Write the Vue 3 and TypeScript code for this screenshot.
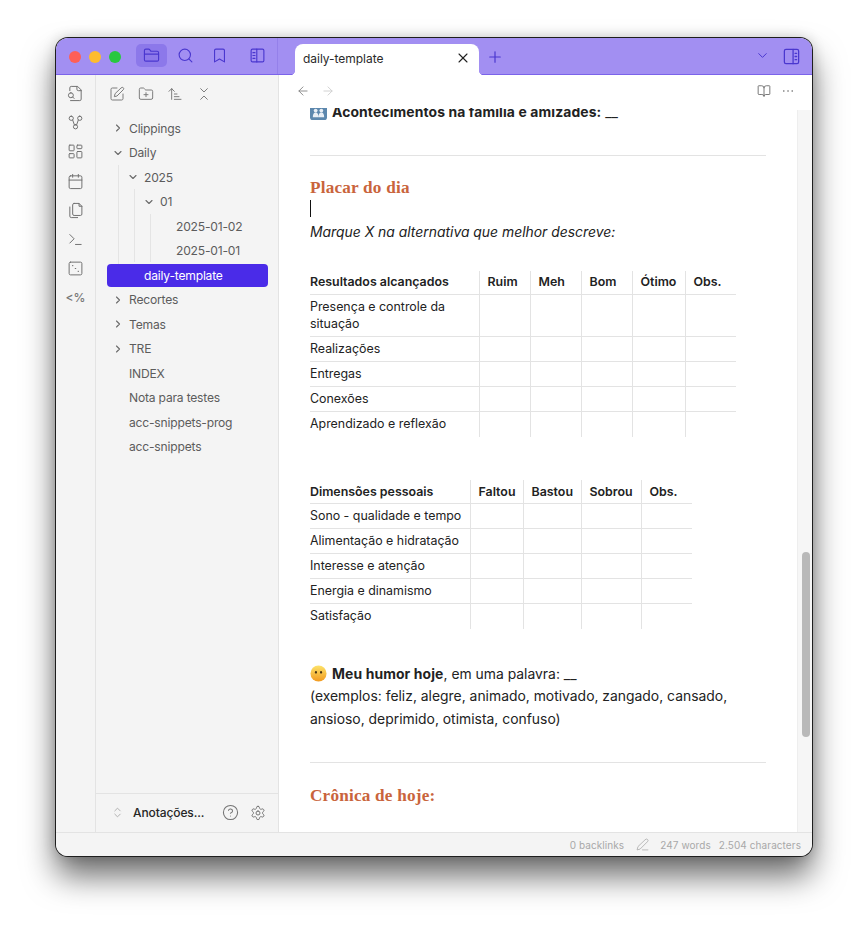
<script setup lang="ts">
const P: Record<string, string[]> = {
  folder: ['M20 20a2 2 0 0 0 2-2V8a2 2 0 0 0-2-2h-7.9a2 2 0 0 1-1.69-.9L9.6 3.9A2 2 0 0 0 7.93 3H4a2 2 0 0 0-2 2v13a2 2 0 0 0 2 2Z', 'M2 10h20'],
  search: ['M11 3a8 8 0 1 0 0 16a8 8 0 1 0 0-16Z', 'M21 21l-4.3-4.3'],
  bookmark: ['M19 21l-7-4-7 4V5a2 2 0 0 1 2-2h10a2 2 0 0 1 2 2v16Z'],
  sideL: ['M5 3h14a2 2 0 0 1 2 2v14a2 2 0 0 1-2 2H5a2 2 0 0 1-2-2V5a2 2 0 0 1 2-2Z', 'M11 3v18', 'M5.5 8h3', 'M5.5 12h3', 'M5.5 16h3'],
  sideR: ['M5 3h14a2 2 0 0 1 2 2v14a2 2 0 0 1-2 2H5a2 2 0 0 1-2-2V5a2 2 0 0 1 2-2Z', 'M14 3v18', 'M16.5 8h2', 'M16.5 12h2', 'M16.5 16h2'],
  chevD: ['M6 9l6 6 6-6'],
  chevR: ['M9 6l6 6-6 6'],
  plus: ['M5 12h14', 'M12 5v14'],
  x: ['M18 6L6 18', 'M6 6l12 12'],
  fileSearch: ['M14 2v4a2 2 0 0 0 2 2h4', 'M5 22h13a2 2 0 0 0 2-2V7l-5-5H6a2 2 0 0 0-2 2v4', 'M5.5 11a3.5 3.5 0 1 0 0 7a3.5 3.5 0 1 0 0-7Z', 'M8 17l2 2'],
  graph: ['M6 3a3 3 0 1 0 0 6a3 3 0 1 0 0-6Z', 'M18 3a3 3 0 1 0 0 6a3 3 0 1 0 0-6Z', 'M12 15a3 3 0 1 0 0 6a3 3 0 1 0 0-6Z', 'M8 8.5l2.5 7', 'M16 8.5l-2.5 7'],
  dash: ['M4 3h5a1 1 0 0 1 1 1v6a1 1 0 0 1-1 1H4a1 1 0 0 1-1-1V4a1 1 0 0 1 1-1Z', 'M15 3h5a1 1 0 0 1 1 1v3a1 1 0 0 1-1 1h-5a1 1 0 0 1-1-1V4a1 1 0 0 1 1-1Z', 'M15 12h5a1 1 0 0 1 1 1v7a1 1 0 0 1-1 1h-5a1 1 0 0 1-1-1v-7a1 1 0 0 1 1-1Z', 'M4 15h5a1 1 0 0 1 1 1v4a1 1 0 0 1-1 1H4a1 1 0 0 1-1-1v-4a1 1 0 0 1 1-1Z'],
  calendar: ['M8 2v4', 'M16 2v4', 'M5 4h14a2 2 0 0 1 2 2v14a2 2 0 0 1-2 2H5a2 2 0 0 1-2-2V6a2 2 0 0 1 2-2Z', 'M3 10h18'],
  copy: ['M10 2h7l4 4v11a2 2 0 0 1-2 2h-9a2 2 0 0 1-2-2V4a2 2 0 0 1 2-2Z', 'M17 2v4h4', 'M4 7v13a2 2 0 0 0 2 2h9'],
  terminal: ['M4 17l6-6-6-6', 'M12 19h8'],
  dice: ['M5 3h14a2 2 0 0 1 2 2v14a2 2 0 0 1-2 2H5a2 2 0 0 1-2-2V5a2 2 0 0 1 2-2Z', 'M7.6 8h.8', 'M11.6 12h.8', 'M15.6 16h.8'],
  edit: ['M12 3H5a2 2 0 0 0-2 2v14a2 2 0 0 0 2 2h14a2 2 0 0 0 2-2v-7', 'M18.4 2.6a2.1 2.1 0 1 1 3 3L12 15l-4 1 1-4Z'],
  folderPlus: ['M12 10v6', 'M9 13h6', 'M20 20a2 2 0 0 0 2-2V8a2 2 0 0 0-2-2h-7.9a2 2 0 0 1-1.69-.9L9.6 3.9A2 2 0 0 0 7.93 3H4a2 2 0 0 0-2 2v13a2 2 0 0 0 2 2Z'],
  sort: ['M3 8l4-4 4 4', 'M7 4v16', 'M11 12h4', 'M11 16h7', 'M11 20h10'],
  collapse: ['M7 20l5-5 5 5', 'M7 4l5 5 5-5'],
  updown: ['M7 15l5 5 5-5', 'M7 9l5-5 5 5'],
  help: ['M12 2a10 10 0 1 0 0 20a10 10 0 1 0 0-20Z', 'M9.1 9a3 3 0 0 1 5.8 1c0 2-3 3-3 3', 'M12 17h.01'],
  gear: ['M12.2 2h-.4a2 2 0 0 0-2 2v.2a2 2 0 0 1-1 1.7l-.4.3a2 2 0 0 1-2 0l-.2-.1a2 2 0 0 0-2.7.7l-.2.4a2 2 0 0 0 .7 2.7l.2.1a2 2 0 0 1 1 1.7v.5a2 2 0 0 1-1 1.7l-.2.1a2 2 0 0 0-.7 2.7l.2.4a2 2 0 0 0 2.7.7l.2-.1a2 2 0 0 1 2 0l.4.3a2 2 0 0 1 1 1.7v.2a2 2 0 0 0 2 2h.4a2 2 0 0 0 2-2v-.2a2 2 0 0 1 1-1.7l.4-.3a2 2 0 0 1 2 0l.2.1a2 2 0 0 0 2.7-.7l.2-.4a2 2 0 0 0-.7-2.7l-.2-.1a2 2 0 0 1-1-1.7v-.5a2 2 0 0 1 1-1.7l.2-.1a2 2 0 0 0 .7-2.7l-.2-.4a2 2 0 0 0-2.7-.7l-.2.1a2 2 0 0 1-2 0l-.4-.3a2 2 0 0 1-1-1.7V4a2 2 0 0 0-2-2Z', 'M12 9a3 3 0 1 0 0 6a3 3 0 1 0 0-6Z'],
  book: ['M12 7v14', 'M3 18a1 1 0 0 1-1-1V4a1 1 0 0 1 1-1h5a4 4 0 0 1 4 4 4 4 0 0 1 4-4h5a1 1 0 0 1 1 1v13a1 1 0 0 1-1 1h-6a3 3 0 0 0-3 3 3 3 0 0 0-3-3Z'],
  more: ['M4.5 12h.5', 'M11.8 12h.5', 'M19 12h.5'],
  left: ['M19 12H5', 'M12 19l-7-7 7-7'],
  right: ['M5 12h14', 'M12 5l7 7-7 7'],
  pen: ['M17 3a2.85 2.85 0 1 1 4 4L7.5 20.5 2 22l1.5-5.5Z', 'M12 22h10'],
}
const ribbon = ['fileSearch', 'graph', 'dash', 'calendar', 'copy', 'terminal', 'dice']
const nav = ['edit', 'folderPlus', 'sort', 'collapse']
const top = ['Clippings']
const rest1 = ['Recortes', 'Temas', 'TRE']
const rest2 = ['INDEX', 'Nota para testes', 'acc-snippets-prog', 'acc-snippets']
const t1Head = ['Resultados alcançados', 'Ruim', 'Meh', 'Bom', 'Ótimo', 'Obs.']
const t1Rows = ['Presença e controle da situação', 'Realizações', 'Entregas', 'Conexões', 'Aprendizado e reflexão']
const t1Cols = [169, 51, 51, 51, 53, 51]
const t2Head = ['Dimensões pessoais', 'Faltou', 'Bastou', 'Sobrou', 'Obs.']
const t2Rows = ['Sono - qualidade e tempo', 'Alimentação e hidratação', 'Interesse e atenção', 'Energia e dinamismo', 'Satisfação']
const t2Cols = [160, 53, 58, 60, 51]
</script>

<template>
  <div class="stage">
    <div class="window">
      <header class="titlebar">
        <div class="left-tools">
          <div class="lights"><i class="red"></i><i class="yellow"></i><i class="green"></i></div>
          <div class="tbtn active"><svg class="ic" viewBox="0 0 24 24"><path v-for="d in P.folder" :key="d" :d="d" /></svg></div>
          <div class="tbtn"><svg class="ic" viewBox="0 0 24 24"><path v-for="d in P.search" :key="d" :d="d" /></svg></div>
          <div class="tbtn"><svg class="ic" viewBox="0 0 24 24"><path v-for="d in P.bookmark" :key="d" :d="d" /></svg></div>
          <div class="tbtn last"><svg class="ic" viewBox="0 0 24 24"><path v-for="d in P.sideL" :key="d" :d="d" /></svg></div>
        </div>
        <div class="tabs">
          <div class="tab">
            <span>daily-template</span>
            <svg class="ic close" viewBox="0 0 24 24"><path v-for="d in P.x" :key="d" :d="d" /></svg>
          </div>
          <svg class="ic newtab" viewBox="0 0 24 24"><path v-for="d in P.plus" :key="d" :d="d" /></svg>
          <div class="spacer"></div>
          <svg class="ic small" viewBox="0 0 24 24"><path v-for="d in P.chevD" :key="d" :d="d" /></svg>
          <svg class="ic sider" viewBox="0 0 24 24"><path v-for="d in P.sideR" :key="d" :d="d" /></svg>
        </div>
      </header>

      <div class="body">
        <aside class="ribbon">
          <svg v-for="n in ribbon" :key="n" class="ric" viewBox="0 0 24 24"><path v-for="d in P[n]" :key="d" :d="d" /></svg>
          <span class="tpl">&lt;%</span>
        </aside>

        <aside class="sidebar">
          <div class="navbar">
            <svg v-for="n in nav" :key="n" class="nic" viewBox="0 0 24 24"><path v-for="d in P[n]" :key="d" :d="d" /></svg>
          </div>
          <div class="tree">
            <div v-for="f in top" :key="f" class="row"><svg class="chev" viewBox="0 0 24 24"><path :d="P.chevR[0]" /></svg>{{ f }}</div>
            <div class="row"><svg class="chev" viewBox="0 0 24 24"><path :d="P.chevD[0]" /></svg>Daily</div>
            <div class="kids">
              <div class="row"><svg class="chev" viewBox="0 0 24 24"><path :d="P.chevD[0]" /></svg>2025</div>
              <div class="kids k2">
                <div class="row"><svg class="chev" viewBox="0 0 24 24"><path :d="P.chevD[0]" /></svg>01</div>
                <div class="kids k3">
                  <div class="row">2025-01-02</div>
                  <div class="row">2025-01-01</div>
                </div>
              </div>
              <div class="row selected">daily-template</div>
            </div>
            <div v-for="f in rest1" :key="f" class="row"><svg class="chev" viewBox="0 0 24 24"><path :d="P.chevR[0]" /></svg>{{ f }}</div>
            <div v-for="f in rest2" :key="f" class="row">{{ f }}</div>
          </div>
          <div class="vault">
            <svg class="updown" viewBox="0 0 24 24"><path v-for="d in P.updown" :key="d" :d="d" /></svg>
            <span class="vname">Anotações...</span>
            <svg class="vic help" viewBox="0 0 24 24"><path v-for="d in P.help" :key="d" :d="d" /></svg>
            <svg class="vic" viewBox="0 0 24 24"><path v-for="d in P.gear" :key="d" :d="d" /></svg>
          </div>
        </aside>

        <main class="main">
          <div class="viewhead">
            <svg class="hic" viewBox="0 0 24 24"><path v-for="d in P.left" :key="d" :d="d" /></svg>
            <svg class="hic dim" viewBox="0 0 24 24"><path v-for="d in P.right" :key="d" :d="d" /></svg>
            <div class="spacer"></div>
            <svg class="hic book" viewBox="0 0 24 24"><path v-for="d in P.book" :key="d" :d="d" /></svg>
            <svg class="hic morei" viewBox="0 0 24 24"><path v-for="d in P.more" :key="d" :d="d" /></svg>
          </div>
          <div class="scroll">
            <div class="note">
              <p class="line first">
                <svg class="emoji fam" viewBox="0 0 18 18">
                  <rect x="0" y="0" width="18" height="18" rx="3" fill="#5c87ad" />
                  <circle cx="6" cy="8" r="2" fill="#e8eef5" /><circle cx="12" cy="8" r="2" fill="#e8eef5" />
                  <path d="M3 15c0-3 1-5 3-5s3 2 3 5Z M9 15c0-3 1-5 3-5s3 2 3 5Z" fill="#e8eef5" />
                </svg>
                <strong>Acontecimentos na família e amizades:</strong> __
              </p>
              <hr class="rule" />
              <h2 class="head">Placar do dia</h2>
              <div class="cursorline"><i class="caret"></i></div>
              <p class="line"><em>Marque X na alternativa que melhor descreve:</em></p>

              <table class="grid t1">
                <colgroup><col v-for="(w, i) in t1Cols" :key="i" :style="{ width: w + 'px' }" /></colgroup>
                <thead><tr><th v-for="h in t1Head" :key="h">{{ h }}</th></tr></thead>
                <tbody>
                  <tr v-for="(r, ri) in t1Rows" :key="r" :class="{ tall: ri === 0 }">
                    <td>{{ r }}</td><td v-for="n in 5" :key="n"></td>
                  </tr>
                </tbody>
              </table>

              <table class="grid t2">
                <colgroup><col v-for="(w, i) in t2Cols" :key="i" :style="{ width: w + 'px' }" /></colgroup>
                <thead><tr><th v-for="h in t2Head" :key="h">{{ h }}</th></tr></thead>
                <tbody>
                  <tr v-for="r in t2Rows" :key="r">
                    <td>{{ r }}</td><td v-for="n in 4" :key="n"></td>
                  </tr>
                </tbody>
              </table>

              <p class="mood">
                <svg class="emoji face" viewBox="0 0 18 18">
                  <defs><linearGradient id="fg" x1="0" y1="0" x2="0" y2="1"><stop offset="0" stop-color="#fde36a" /><stop offset="1" stop-color="#f29a1f" /></linearGradient></defs>
                  <circle cx="9" cy="9" r="8.5" fill="url(#fg)" />
                  <ellipse cx="6.3" cy="7.8" rx="1.1" ry="1.5" fill="#4a3413" />
                  <ellipse cx="11.7" cy="7.8" rx="1.1" ry="1.5" fill="#4a3413" />
                </svg>
                <strong>Meu humor hoje</strong>, em uma palavra: __<br />
                (exemplos: feliz, alegre, animado, motivado, zangado, cansado,<br />
                ansioso, deprimido, otimista, confuso)
              </p>
              <hr class="rule r2" />
              <h2 class="head h2b">Crônica de hoje:</h2>
            </div>
            <div class="track"><div class="thumb"></div></div>
          </div>
        </main>
      </div>

      <footer class="status">
        <span class="gapr">0 backlinks</span>
        <svg class="pen" viewBox="0 0 24 24"><path v-for="d in P.pen" :key="d" :d="d" /></svg>
        <span class="words">247 words</span>
        <span>2.504 characters</span>
      </footer>
    </div>
  </div>
</template>

<style>
html, body { margin: 0; background: #fff; }
</style>

<style scoped>
* { box-sizing: border-box; }
svg { fill: none; stroke: currentColor; stroke-linecap: round; stroke-linejoin: round; display: block; flex: none; }
.stage {
  width: 868px; height: 930px; padding: 38px 56px 74px;
  font-family: Inter, "Noto Sans", sans-serif; color: #222; overflow: hidden;
}
.window {
  width: 756px; height: 818px; border-radius: 12px; overflow: hidden;
  display: flex; flex-direction: column; background: #fff;
  box-shadow: 0 0 0 1px #1e1e1e, 0 20px 32px rgba(0,0,0,.58), 0 0 14px rgba(0,0,0,.2);
}
.titlebar { height: 37px; flex: none; display: flex; background: #a28ff2; border-bottom: 1px solid #7b63ea; }
.left-tools { width: 222px; display: flex; align-items: flex-start; border-right: 1px solid #9480ea; flex: none; height: 36px; position: relative; }
.lights { display: flex; gap: 8px; padding: 13px 0 0 13px; width: 80px; flex: none; }
.lights i { width: 12px; height: 12px; border-radius: 50%; display: block; }
.red { background: #fe5f57; } .yellow { background: #febc2e; } .green { background: #28c840; }
.tbtn { width: 31px; height: 23px; margin-top: 6px; border-radius: 5px; display: flex; align-items: center; justify-content: center; color: #4a37cf; margin-right: 3px; }
.tbtn.active { background: #8c78ea; }
.tbtn.last { margin-left: 4px; }
.ic { width: 17px; height: 17px; stroke-width: 1.6; color: #4a37cf; }
.tabs { flex: 1; display: flex; align-items: flex-start; padding-left: 17px; position: relative; }
.tab {
  width: 184px; height: 31px; margin-top: 6px; background: #fff; border-radius: 8px 8px 0 0;
  display: flex; align-items: center; justify-content: space-between; padding: 0 8px 3px 8px;
  font-size: 12px; letter-spacing: -.03px; color: #2a2a2a; position: relative;
}
.tab::before, .tab::after { content: ""; position: absolute; bottom: 0; width: 5px; height: 5px; }
.tab::before { left: -5px; background: radial-gradient(circle at 0 0, transparent 5px, #fff 5.5px); }
.tab::after { right: -5px; background: radial-gradient(circle at 100% 0, transparent 5px, #fff 5.5px); }
.close { color: #222; width: 16px; height: 16px; }
.newtab { margin: 10px 0 0 7px; width: 18px; height: 18px; }
.spacer { flex: 1; }
.small { margin: 10px 12px 0 0; width: 15px; height: 15px; }
.sider { margin: 9px 11px 0 0; width: 19px; height: 19px; }

.body { flex: 1; display: flex; min-height: 0; }
.ribbon { width: 40px; flex: none; background: #f4f4f4; border-right: 1px solid #e3e3e3; display: flex; flex-direction: column; align-items: center; padding-top: 10px; gap: 12.2px; color: #707070; }
.ric { width: 17px; height: 17px; stroke-width: 1.4; }
.tpl { font-size: 12px; font-weight: 500; line-height: 17px; color: #777; }
.sidebar { width: 183px; flex: none; background: #f4f4f4; border-right: 1px solid #e3e3e3; display: flex; flex-direction: column; }
.navbar { height: 41.5px; display: flex; gap: 13px; padding: 11px 0 0 13px; color: #7d7d7d; flex: none; }
.nic { width: 16px; height: 16px; stroke-width: 1.5; }
.tree { flex: 1; font-size: 12.1px; letter-spacing: -.2px; color: #5c5c5c; }
.row { height: 23px; margin-bottom: 1.5px; display: flex; align-items: center; padding-left: 33px; position: relative; white-space: nowrap; }
.chev { position: absolute; left: 16px; top: 5.5px; width: 12px; height: 12px; stroke-width: 2.2; color: #6a6a6a; }
.kids { margin-left: 22px; border-left: 1px solid #e4e4e4; padding-left: 0; margin-top: -1px; padding-top: 1px; }
.kids > .row { padding-left: 25px; }
.kids > .row .chev { left: 8px; }
.k2 { margin-left: 15px; }
.k2 > .row { padding-left: 25px; }
.k2 > .row .chev { left: 8px; }
.k3 { margin-left: 15px; margin-top: -1px; }
.k3 > .row { padding-left: 25px; }
.kids > .row.selected { background: #4a2be8; color: #fff; border-radius: 4px; margin-left: -12px; margin-right: 10px; padding-left: 37px; width: 161px; }
.vault { height: 39px; border-top: 1px solid #e3e3e3; flex: none; display: flex; align-items: center; padding: 0 0 1px 15px; }
.updown { width: 13px; height: 15px; color: #a6a6a6; stroke-width: 1.6; }
.vname { font-size: 12px; font-weight: 500; letter-spacing: -.1px; color: #262626; margin-left: 9px; width: 89px; }
.vic { width: 16px; height: 16px; color: #747474; stroke-width: 1.5; }
.help { margin-right: 11px; width: 17px; height: 17px; }

.main { flex: 1; display: flex; flex-direction: column; min-width: 0; background: #fff; }
.viewhead { height: 33px; flex: none; display: flex; align-items: flex-start; padding: 9px 17px 0 17px; background: #fff; gap: 11px; color: #888; }
.hic { width: 14px; height: 14px; stroke-width: 1.6; }
.dim { color: #cfcfcf; }
.book { color: #707070; width: 14px; height: 14px; }
.morei { color: #707070; stroke-width: 2.4; width: 14px; margin-left: -1px; }
.scroll { flex: 1; overflow: hidden; position: relative; min-height: 0; }
.note { padding: 0 46px 0 31px; font-size: 13.9px; line-height: 22.5px; }
.note strong { letter-spacing: .12px; }
.line { margin: 0; }
.first { margin-top: -7.5px; }
.emoji { display: inline-block; vertical-align: -3px; stroke: none; width: 17px; height: 17px; margin-right: 5px; }
.rule { border: 0; border-top: 1px solid #e3e3e3; margin: 32px 0 0; }
.head { font-family: "Liberation Serif", "DejaVu Serif", serif; color: #c9643c; font-size: 17.2px; letter-spacing: .2px; line-height: 24px; font-weight: 700; margin: 20px 0 0; }
.cursorline { height: 21px; padding-top: 0; }
.caret { display: block; width: 1px; height: 17px; background: #111; }
.grid { border-collapse: collapse; table-layout: fixed; font-size: 12.4px; line-height: 17px; width: 0; }
.t1 { margin-top: 27px; width: 426px; }
.t2 { margin-top: 43px; width: 382px; }
.grid th, .grid td { padding: 0 4px 0 8px; border-left: 1px solid #e3e3e3; border-bottom: 1px solid #e3e3e3; text-align: left; height: 25px; font-weight: 400; }
.grid th { font-weight: 600; height: 24px; padding-bottom: 1px; }
.grid td { padding-bottom: 1px; }
.grid th:first-child, .grid td:first-child { border-left: 0; padding-left: 0; }
.grid tr:last-child td { border-bottom: 0; }
.grid tr.tall td { height: 42px; }
.t2 th { padding-bottom: 0; }
.mood { margin: 34px 0 0; }
.r2 { margin-top: 31.5px; }
.h2b { margin-top: 21px; }
.track { position: absolute; right: 0; top: 2px; bottom: 0; width: 15px; background: #f6f6f6; border-left: 1px solid #eee; }
.thumb { position: absolute; left: 4px; top: 442px; width: 8px; height: 185px; border-radius: 4px; background: #b9b9b9; }

.status { height: 24px; flex: none; background: #f4f4f4; border-top: 1px solid #e3e3e3; display: flex; align-items: center; justify-content: flex-end; padding-right: 11px; font-size: 10px; color: #a8a8a8; letter-spacing: .08px; }
.gapr { margin-right: 12px; }
.pen { width: 13px; height: 13px; stroke-width: 1.4; margin-right: 11px; }
.words { margin-right: 8px; }
</style>
